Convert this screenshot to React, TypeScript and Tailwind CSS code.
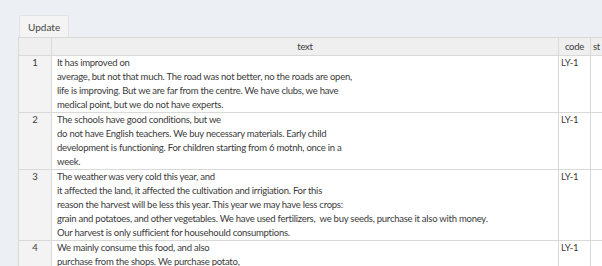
import React from "react";

type Row = { id: number; lines: string[]; code: string };

const rows: Row[] = [
  {
    id: 1,
    code: "LY-1",
    lines: [
      "It has improved on",
      "average, but not that much. The road was not better, no the roads are open,",
      "life is improving. But we are far from the centre. We have clubs, we have",
      "medical point, but we do not have experts.",
    ],
  },
  {
    id: 2,
    code: "LY-1",
    lines: [
      "The schools have good conditions, but we",
      "do not have English teachers. We buy necessary materials. Early child",
      "development is functioning. For children starting from 6 motnh, once in a",
      "week.",
    ],
  },
  {
    id: 3,
    code: "LY-1",
    lines: [
      "The weather was very cold this year, and",
      "it affected the land, it affected the cultivation and irrigiation. For this",
      "reason the harvest will be less this year. This year we may have less crops:",
      "grain and potatoes, and other vegetables. We have used fertilizers,  we buy seeds, purchase it also with money.",
      "Our harvest is only sufficient for househould consumptions.",
    ],
  },
  {
    id: 4,
    code: "LY-1",
    lines: [
      "We mainly consume this food, and also",
      "purchase from the shops. We purchase potato,",
      "",
    ],
  },
];

export default function App() {
  return (
    <div
      className="w-[602px] h-[266px] overflow-hidden bg-[#eceff3] text-[#3a3a3a] text-[9.5px] leading-[14px] tracking-[-0.25px]"
      style={{ fontFamily: "Lato, 'Noto Sans', sans-serif" }}
    >
      <div className="pt-[15px] pl-[18px]">
        <button className="ml-px h-[22px] px-[8px] bg-[#f4f4f4] border border-b-0 border-[#e2e2e2] rounded-t-[2px] text-[#444] text-[10px] tracking-normal">
          Update
        </button>
        <table className="table-fixed border-collapse w-[640px] bg-white">
          <colgroup>
            <col className="w-[33px]" />
            <col className="w-[507px]" />
            <col className="w-[32px]" />
            <col className="w-[68px]" />
          </colgroup>
          <thead>
            <tr className="h-[18px] bg-[#efefef]">
              <th className="border border-[#d9d9d9] font-normal"></th>
              <th className="border border-[#d9d9d9] font-normal text-center">text</th>
              <th className="border border-[#d9d9d9] font-normal text-center">code</th>
              <th className="border border-[#d9d9d9] font-normal text-left pl-[2px]">st</th>
            </tr>
          </thead>
          <tbody>
            {rows.map((r) => (
              <tr key={r.id}>
                <td className="border border-[#d9d9d9] bg-[#f3f3f3] text-center align-top">{r.id}</td>
                <td className="border border-[#d9d9d9] pl-[5px] align-top whitespace-pre">
                  {r.lines.map((l, i) => (
                    <div key={i} className="h-[14px]">
                      {l}
                    </div>
                  ))}
                </td>
                <td className="border border-[#d9d9d9] pl-[2px] align-top">{r.code}</td>
                <td className="border border-[#d9d9d9] align-top"></td>
              </tr>
            ))}
          </tbody>
        </table>
      </div>
    </div>
  );
}
